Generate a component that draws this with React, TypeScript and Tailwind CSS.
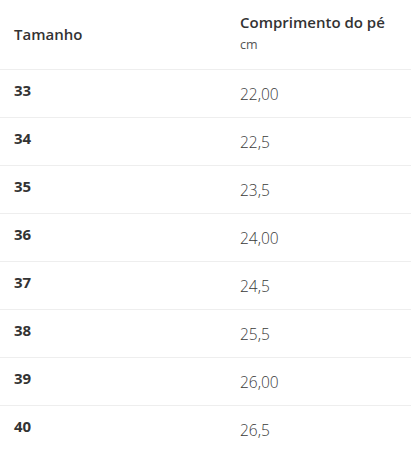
const rows: [string, string][] = [
  ["33", "22,00"],
  ["34", "22,5"],
  ["35", "23,5"],
  ["36", "24,00"],
  ["37", "24,5"],
  ["38", "25,5"],
  ["39", "26,00"],
  ["40", "26,5"],
];

export default function App() {
  return (
    <div className="w-[411px] bg-white text-[#333] font-['Open_Sans',sans-serif]">
      <div className="grid grid-cols-[226px_1fr] h-[70px] border-b border-[#eeeeee] px-[14px]">
        <div className="pt-[25px] text-[15px] font-semibold leading-[18px]">Tamanho</div>
        <div className="pt-[13px]">
          <div className="text-[15px] font-semibold leading-[18px]">Comprimento do pé</div>
          <div className="text-[12.5px] text-[#555] leading-[16px] mt-[6px]">cm</div>
        </div>
      </div>
      {rows.map(([size, cm]) => (
        <div key={size} className="grid grid-cols-[226px_1fr] h-[48px] border-b border-[#eeeeee] px-[14px] last:border-b-0">
          <div className="pt-[11px] text-[15px] font-bold leading-[18px]">{size}</div>
          <div className="pt-[15px] text-[15.5px] font-light leading-[18px] text-[#3a3a3a]">{cm}</div>
        </div>
      ))}
    </div>
  );
}
